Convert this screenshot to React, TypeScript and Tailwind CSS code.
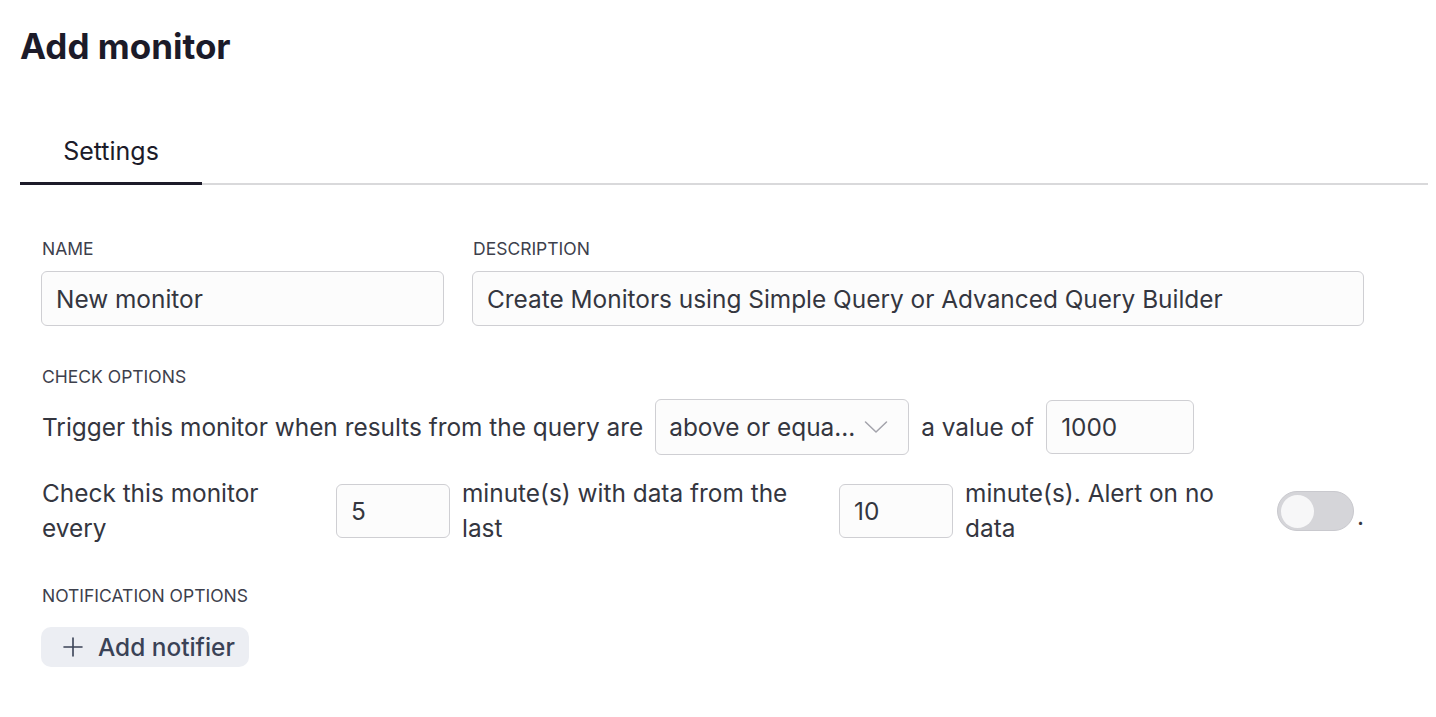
import React, { useState } from "react";

const font = { fontFamily: "Inter, 'Noto Sans', sans-serif" };

const Label: React.FC<{ children: React.ReactNode; className?: string }> = ({
   children,
   className,
}) => (
   <div
      className={
         "pl-[1px] text-[17.5px] leading-[20px] uppercase text-[#3d404c] " +
         (className ?? "mb-[12px]")
      }
   >
      {children}
   </div>
);

const Field: React.FC<{ value: string; className?: string }> = ({
   value,
   className,
}) => (
   <input
      readOnly
      value={value}
      className={
         "rounded-[6px] border border-[#cfcfd3] bg-[#fcfcfc] px-[14px] text-[24.4px] text-[#34363f] outline-none " +
         (className ?? "")
      }
   />
);

export default function App() {
   const [alertOn, setAlertOn] = useState(false);

   return (
      <div className="min-h-screen bg-white pl-[20px] pr-[8px]" style={font}>
         <h1 className="pt-[24px] text-[35px] leading-[44px] font-bold text-[#1c1b29]">
            Add monitor
         </h1>

         {/* tabs */}
         <div className="mt-[68px] flex border-b-2 border-[#d9d9db]">
            <div className="-mb-[2px] w-[182px] border-b-[3px] border-[#1c1b29] pb-[16px] text-center text-[25px] leading-[30px] text-[#1c1b29]">
               Settings
            </div>
         </div>

         <div className="pl-[21px] pt-[54px] text-[#34363f]">
            <div className="flex gap-[28px]">
               <div className="w-[403px]">
                  <Label>Name</Label>
                  <Field value="New monitor" className="h-[55px] w-full" />
               </div>
               <div className="w-[892px]">
                  <Label>Description</Label>
                  <Field
                     value="Create Monitors using Simple Query or Advanced Query Builder"
                     className="h-[55px] w-full"
                  />
               </div>
            </div>

            <div className="mt-[41px] w-[1323px]">
               <Label>Check options</Label>
               <div className="flex items-center gap-[12px] pl-[1px] text-[24.4px] leading-[35px]">
                  <span>Trigger this monitor when results from the query are</span>
                  <div className="flex h-[56px] w-[254px] shrink-0 items-center justify-between rounded-[6px] border border-[#cfcfd3] bg-[#fcfcfc] pl-[13px] pr-[20px]">
                     <span>above or equa...</span>
                     <svg width="24" height="14" viewBox="0 0 24 14" fill="none">
                        <path
                           d="M1.5 2 L12 12 L22.5 2"
                           stroke="#a3a3ab"
                           strokeWidth="1.5"
                           strokeLinecap="round"
                           strokeLinejoin="round"
                        />
                     </svg>
                  </div>
                  <span>a value of</span>
                  <Field value="1000" className="h-[54px] w-[148px]" />
               </div>

               <div className="mt-[21px] flex items-center gap-[12px] pl-[1px] text-[24.4px] leading-[35px]">
                  <span>Check this monitor every</span>
                  <Field value="5" className="h-[54px] w-[114px] shrink-0" />
                  <span>minute(s) with data from the last</span>
                  <Field value="10" className="h-[54px] w-[114px] shrink-0" />
                  <span>minute(s). Alert on no data</span>
                  <div className="flex shrink-0 items-end">
                     <button
                        onClick={() => setAlertOn(!alertOn)}
                        className={
                           "relative h-[40px] w-[77px] rounded-full border border-[#c9c9ce] " +
                           (alertOn ? "bg-[#2563eb]" : "bg-[#d5d5d9]")
                        }
                     >
                        <span
                           className={
                              "absolute top-[2.5px] h-[33px] w-[33px] rounded-full bg-[#f7f7f8] " +
                              (alertOn ? "left-[39px]" : "left-[3px]")
                           }
                        />
                     </button>
                     <span className="ml-[3px] leading-[30px]">.</span>
                  </div>
               </div>
            </div>

            <div className="mt-[40px]">
               <Label className="mb-[21px]">Notification options</Label>
               <button className="flex h-[40px] items-center gap-[14px] rounded-[10px] bg-[#eceef3] pl-[21px] pr-[14px] text-[24.4px] font-medium text-[#3a4256]">
                  <svg width="22" height="22" viewBox="0 0 22 22" fill="none">
                     <path
                        d="M11 2 V20 M2 11 H20"
                        stroke="#3a4256"
                        strokeWidth="1.6"
                        strokeLinecap="round"
                     />
                  </svg>
                  Add notifier
               </button>
            </div>
         </div>
      </div>
   );
}
